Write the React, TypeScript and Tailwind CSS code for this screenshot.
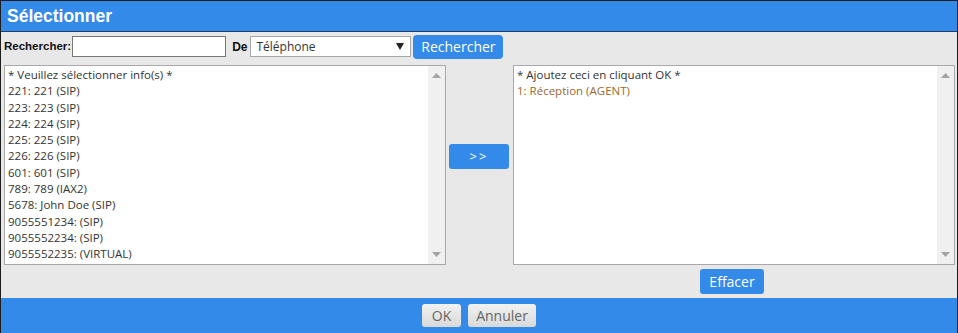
import React from "react";

const items = [
  "221: 221 (SIP)",
  "223: 223 (SIP)",
  "224: 224 (SIP)",
  "225: 225 (SIP)",
  "226: 226 (SIP)",
  "601: 601 (SIP)",
  "789: 789 (IAX2)",
  "5678: John Doe (SIP)",
  "9055551234: (SIP)",
  "9055552234: (SIP)",
  "9055552235: (VIRTUAL)",
];

function ScrollBar() {
  return (
    <div className="w-[17px] h-full bg-[#f0f0f0] flex flex-col items-center justify-between py-[7px]">
      <svg width="9" height="5" viewBox="0 0 9 5"><polygon points="4.5,0 9,5 0,5" fill="#a3a3a3" /></svg>
      <svg width="9" height="5" viewBox="0 0 9 5"><polygon points="0,0 9,0 4.5,5" fill="#a3a3a3" /></svg>
    </div>
  );
}

function ListBox({ children }: { children: React.ReactNode }) {
  return (
    <div className="w-[442px] h-[200px] bg-white border border-[#a9a9a9] flex">
      <div className="flex-1 pl-[3px] pt-[1px] text-[11.5px] leading-[16.3px] text-[#333]" style={{ fontFamily: '"Open Sans", "Noto Sans", sans-serif' }}>
        {children}
      </div>
      <ScrollBar />
    </div>
  );
}

const ui = { fontFamily: '"Open Sans", "Noto Sans", sans-serif' };
const lab = { fontFamily: '"Liberation Sans", Arial, sans-serif' };

export default function App() {
  return (
    <div className="w-[958px] h-[333px] bg-[#e8e8e8] border-l border-r border-t border-[#1e1e1e] flex flex-col overflow-hidden">
      <div className="h-[31px] bg-[#338ae8] border-b border-[#1d3f6a] flex items-center pl-[6px] shrink-0">
        <span className="text-white font-bold text-[17.5px]" style={lab}>
          Sélectionner
        </span>
      </div>
      <div className="flex-1 flex flex-col pl-[3px]">
        <div className="flex items-center h-[29px]">
          <span className="font-bold text-[11.5px] text-[#111] mr-[1px]" style={lab}>
            Rechercher:
          </span>
          <div className="w-[154px] h-[21px] bg-white border border-[#767676]" />
          <span className="font-bold text-[12px] text-[#111] ml-[6px] mr-[3px]" style={lab}>
            De
          </span>
          <div className="w-[161px] h-[21px] bg-white border border-[#a9a9a9] flex items-center justify-between pl-[5px] pr-[6px]">
            <span className="text-[12px] text-[#333]" style={ui}>Téléphone</span>
            <svg width="8" height="7" viewBox="0 0 8 7"><polygon points="0,0 8,0 4,7" fill="#222" /></svg>
          </div>
          <button className="ml-[2px] w-[90px] h-[24px] rounded-[4px] bg-[#338ae8] text-white text-[14px] flex items-center justify-center" style={ui}>
            Rechercher
          </button>
        </div>
        <div className="flex mt-[4px]">
          <ListBox>
            <div>* Veuillez sélectionner info(s) *</div>
            {items.map((t) => (
              <div key={t}>{t}</div>
            ))}
          </ListBox>
          <div className="w-[67px] flex justify-center">
            <button className="mt-[79px] mr-[1px] w-[60px] h-[25px] rounded-[3px] bg-[#338ae8] text-white text-[13px] tracking-[2px] flex items-center justify-center" style={ui}>
              &gt;&gt;
            </button>
          </div>
          <ListBox>
            <div>* Ajoutez ceci en cliquant OK *</div>
            <div className="text-[#9a6a2e]">1: Réception (AGENT)</div>
          </ListBox>
        </div>
        <div className="flex mt-[4px]">
          <div className="w-[507px]" />
          <div className="w-[442px] flex justify-center">
            <button className="w-[64px] h-[25px] rounded-[3px] bg-[#338ae8] text-white text-[14px] flex items-center justify-center" style={ui}>
              Effacer
            </button>
          </div>
        </div>
      </div>
      <div className="h-[35px] bg-[#338ae8] flex items-center justify-center gap-[7px] shrink-0">
        <button className="w-[39px] h-[23px] rounded-[3px] bg-gradient-to-b from-[#f2f2f2] to-[#d9d9d9] text-[#666] text-[14px] flex items-center justify-center" style={ui}>
          OK
        </button>
        <button className="w-[68px] h-[23px] rounded-[3px] bg-gradient-to-b from-[#f2f2f2] to-[#d9d9d9] text-[#666] text-[14px] flex items-center justify-center" style={ui}>
          Annuler
        </button>
      </div>
    </div>
  );
}
